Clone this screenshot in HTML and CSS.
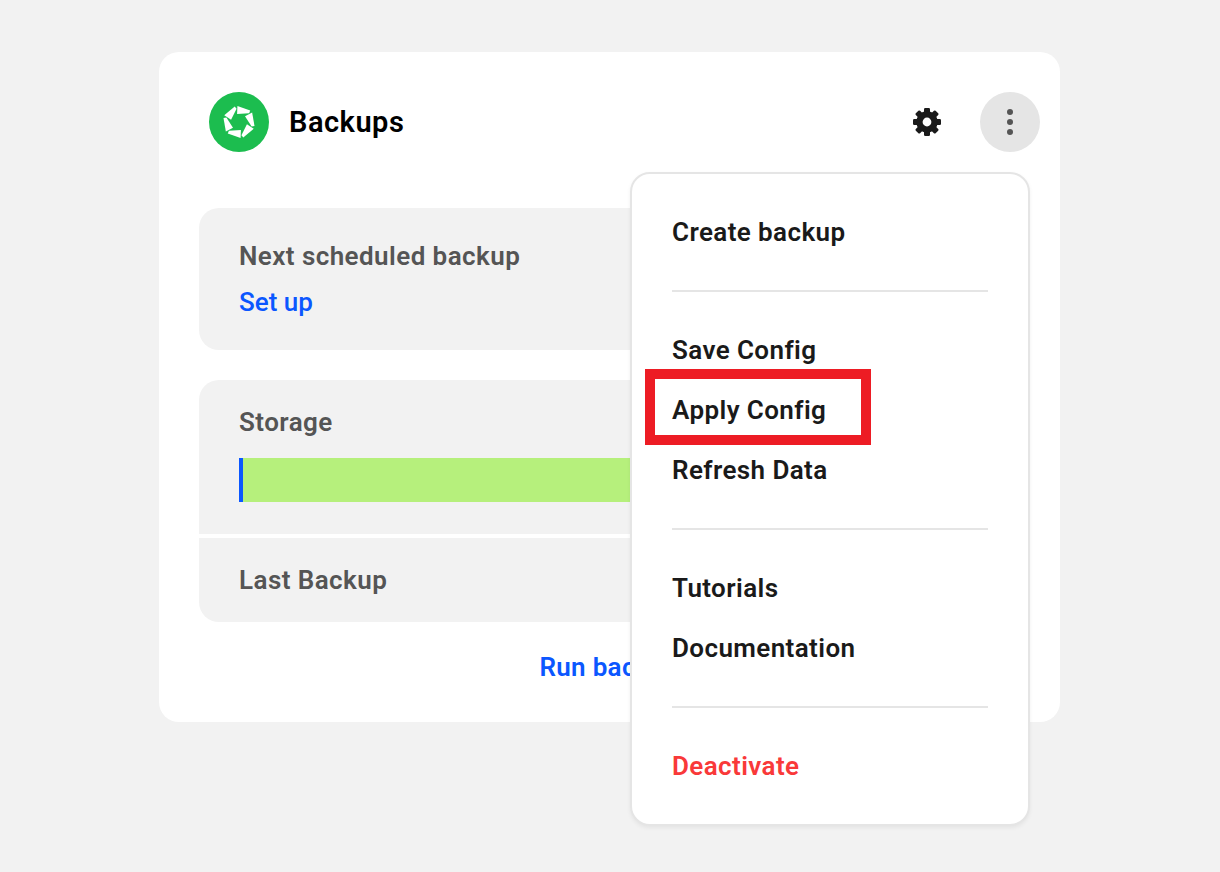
FILE: index.html
```html
<!DOCTYPE html>
<html lang="en">
<head>
<meta charset="utf-8">
<title>Backups</title>
<link rel="stylesheet" href="styles.css">
</head>
<body>
<main class="card">
  <header class="head">
    <div class="brand">
      <span class="logo">
        <svg viewBox="-17 -17 34 34" width="36" height="36" aria-hidden="true">
          <g fill="#fff">
            <path d="M-1.5 -15.2 L10.6 -10.8 L9.6 -8.2 L-1.8 -7.6 Z"/>
            <path d="M-1.5 -15.2 L10.6 -10.8 L9.6 -8.2 L-1.8 -7.6 Z" transform="rotate(60)"/>
            <path d="M-1.5 -15.2 L10.6 -10.8 L9.6 -8.2 L-1.8 -7.6 Z" transform="rotate(120)"/>
            <path d="M-1.5 -15.2 L10.6 -10.8 L9.6 -8.2 L-1.8 -7.6 Z" transform="rotate(180)"/>
            <path d="M-1.5 -15.2 L10.6 -10.8 L9.6 -8.2 L-1.8 -7.6 Z" transform="rotate(240)"/>
            <path d="M-1.5 -15.2 L10.6 -10.8 L9.6 -8.2 L-1.8 -7.6 Z" transform="rotate(300)"/>
          </g>
        </svg>
      </span>
      <h1 class="title">Backups</h1>
    </div>
    <div class="actions">
      <button class="icon-btn gear-btn" aria-label="Settings">
        <svg viewBox="-15 -15 30 30" width="30" height="30" aria-hidden="true">
          <g fill="#1a1a1a">
            <rect x="-3" y="-14" width="6" height="28" rx="1.2"/>
            <rect x="-3" y="-14" width="6" height="28" rx="1.2" transform="rotate(45)"/>
            <rect x="-3" y="-14" width="6" height="28" rx="1.2" transform="rotate(90)"/>
            <rect x="-3" y="-14" width="6" height="28" rx="1.2" transform="rotate(135)"/>
          </g>
          <circle r="7.5" fill="none" stroke="#1a1a1a" stroke-width="6.4"/>
          <circle r="4.4" fill="#fff"/>
        </svg>
      </button>
      <button class="icon-btn is-open" aria-label="More">
        <span class="dots"><i></i><i></i><i></i></span>
      </button>
    </div>
  </header>

  <section class="panel">
    <div class="label">Next scheduled backup</div>
    <a class="link setup">Set up</a>
  </section>

  <section class="stack">
    <div class="panel storage">
      <div class="label">Storage</div>
      <div class="bar"><span class="bar-used"></span><span class="bar-free"></span></div>
    </div>
    <div class="panel last">
      <div class="label">Last Backup</div>
    </div>
  </section>

  <div class="run"><a class="link run-link">Run backup</a></div>

  <nav class="menu">
    <a class="item">Create backup</a>
    <hr class="rule">
    <a class="item">Save Config</a>
    <a class="item">Apply Config</a>
    <a class="item">Refresh Data</a>
    <hr class="rule">
    <a class="item">Tutorials</a>
    <a class="item">Documentation</a>
    <hr class="rule">
    <a class="item danger">Deactivate</a>
  </nav>
  <div class="callout"></div>
</main>
</body>
</html>
```
FILE: styles.css
```css
* { box-sizing: border-box; }
html, body { margin: 0; height: 100%; }
body {
  background: #f2f2f2;
  font-family: Roboto, "Liberation Sans", sans-serif;
  padding: 52px 160px 0 159px;
}
.card {
  position: relative;
  width: 901px;
  height: 670px;
  background: #fff;
  border-radius: 20px;
  padding: 40px 20px 0 40px;
}
.head {
  display: flex;
  justify-content: space-between;
  align-items: center;
  height: 60px;
  padding-left: 10px;
  margin-bottom: 56px;
}
.brand { display: flex; align-items: center; gap: 20px; }
.logo {
  width: 60px;
  height: 60px;
  border-radius: 50%;
  background: #1cbd4f;
  display: flex;
  align-items: center;
  justify-content: center;
}
.title { margin: 0; font-size: 29px; font-weight: 600; color: #000; letter-spacing: .5px; }
.actions { display: flex; gap: 20px; }
.icon-btn {
  width: 60px;
  height: 60px;
  border: 0;
  padding: 0;
  border-radius: 50%;
  background: transparent;
  display: flex;
  align-items: center;
  justify-content: center;
}
.gear-btn { padding-right: 6px; }
.is-open { background: #e5e5e5; }
.dots { display: flex; flex-direction: column; gap: 4px; }
.dots i { width: 6px; height: 6px; border-radius: 50%; background: #555; display: block; }
.panel {
  width: 821px;
  background: #f2f2f2;
  border-radius: 20px;
  padding: 32px 40px 0;
  height: 142px;
}
.label { font-size: 26px; font-weight: 600; color: #555; line-height: 32px; letter-spacing: .43px; }
.link { color: #0b57ff; font-size: 26px; font-weight: 500; line-height: 32px; }
.setup { display: block; margin-top: 14px; }
.run-link { font-weight: 600; letter-spacing: .3px; }
.stack { margin-top: 30px; display: flex; flex-direction: column; gap: 4px; }
.storage { height: 154px; border-radius: 20px 20px 0 0; padding-top: 26px; }
.last { height: 84px; border-radius: 0 0 20px 20px; padding-top: 26px; }
.bar { display: flex; height: 44px; margin-top: 20px; }
.bar-used { width: 4px; background: #0b57ff; }
.bar-free { flex: 1; background: #b6f07c; }
.run { width: 821px; text-align: center; margin-top: 29px; }
.menu {
  position: absolute;
  left: 471px;
  top: 120px;
  width: 400px;
  height: 654px;
  background: #fff;
  border: 2px solid #e5e5e5;
  border-radius: 20px;
  padding: 28px 40px;
  box-shadow: 0 2px 4px rgba(0,0,0,.06);
  display: flex;
  flex-direction: column;
}
.item {
  display: block;
  height: 60px;
  line-height: 60px;
  font-size: 26px;
  font-weight: 600;
  color: #1a1a1a;
  letter-spacing: .4px;
}
.danger { color: #f93939; }
.rule { width: 100%; height: 2px; margin: 28px 0; border: 0; background: #e5e5e5; }
.callout {
  position: absolute;
  left: 486px;
  top: 317px;
  width: 226px;
  height: 76px;
  border: 10px solid #ed1c24;
}
```
